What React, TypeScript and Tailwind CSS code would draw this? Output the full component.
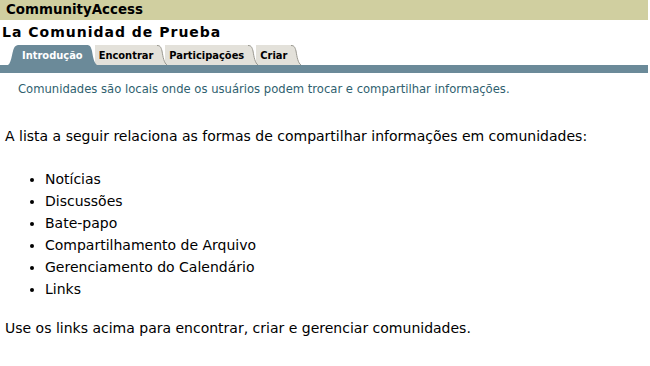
import React from "react";

const ACTIVE = "#6b8a99";
const IDLE = "#e3e1da";

type Tab = { id: string; title: string };

const tabs: Tab[] = [
  { id: "intro", title: "Introdução" },
  { id: "find", title: "Encontrar" },
  { id: "part", title: "Participações" },
  { id: "create", title: "Criar" },
];

const items = [
  "Notícias",
  "Discussões",
  "Bate-papo",
  "Compartilhamento de Arquivo",
  "Gerenciamento do Calendário",
  "Links",
];

const LeftEdge = ({ fill }: { fill: string }) => (
  <svg width="10" height="20" viewBox="0 0 10 20" className="block shrink-0">
    <path d="M0 20 C4 18 4 4 7 1.5 C8 0.5 9 0 10 0 L10 20 Z" fill={fill} />
  </svg>
);

const RightEdge = ({ fill, line }: { fill: string; line?: boolean }) => (
  <svg width="10" height="20" viewBox="0 0 10 20" className="block shrink-0">
    <path d="M0 0 C3 0 4 2 5 6 C6 12 7 18 10 20 L0 20 Z" fill={fill} />
    {line && <path d="M0 0.5 C3 0.5 4 2 5 6 C6 12 7 18 10 20" fill="none" stroke="#9a9890" strokeWidth="1" />}
  </svg>
);

const TabRow = ({ active }: { active: string }) => (
  <div className="flex h-[20px] items-end pl-[8px]">
    {tabs.map((t, i) => {
      const on = t.id === active;
      const bg = on ? ACTIVE : IDLE;
      return (
        <div key={t.id} className={`flex h-[20px] ${i > 0 ? "-ml-[2px]" : ""}`} style={{ zIndex: on ? 10 : tabs.length - i }}>
          {i === 0 && <LeftEdge fill={bg} />}
          <div
            className={`flex h-[20px] items-center px-[4px] text-[11px] font-bold leading-none ${on ? "text-white" : "text-black"}`}
            style={{ background: bg, fontFamily: '"DejaVu Sans Condensed", "DejaVu Sans", sans-serif' }}
          >
            {t.title}
          </div>
          <RightEdge fill={bg} line={!on} />
        </div>
      );
    })}
  </div>
);

export default function App() {
  return (
    <div className="h-[366px] w-[650px] bg-white" style={{ fontFamily: '"DejaVu Sans", sans-serif' }}>
      <div className="mr-[2px] flex h-[20px] items-center bg-[#d0cfa0] pl-[6px] text-[13.4px] font-bold text-black">
        CommunityAccess
      </div>
      <div className="pl-[2px] pt-[1px] text-[14px] font-bold leading-[22px] tracking-[1px] text-black">
        La Comunidad de Prueba
      </div>
      <div className="mt-[2px]">
        <TabRow active="intro" />
        <div className="mr-[2px] h-[8px] bg-[#6b8a99]" />
      </div>
      <div className="pl-[18px] pt-[9px] text-[11.6px] leading-[14px] text-[#2f5f6f]">
        Comunidades são locais onde os usuários podem trocar e compartilhar informações.
      </div>
      <div className="pl-[5px] pt-[29px] text-[14px] leading-[22px] text-black">
        <p>A lista a seguir relaciona as formas de compartilhar informações em comunidades:</p>
        <ul className="mt-[21px] list-disc pl-[40px]">
          {items.map(it => (
            <li key={it}>{it}</li>
          ))}
        </ul>
        <p className="mt-[17px]">Use os links acima para encontrar, criar e gerenciar comunidades.</p>
      </div>
    </div>
  );
}
